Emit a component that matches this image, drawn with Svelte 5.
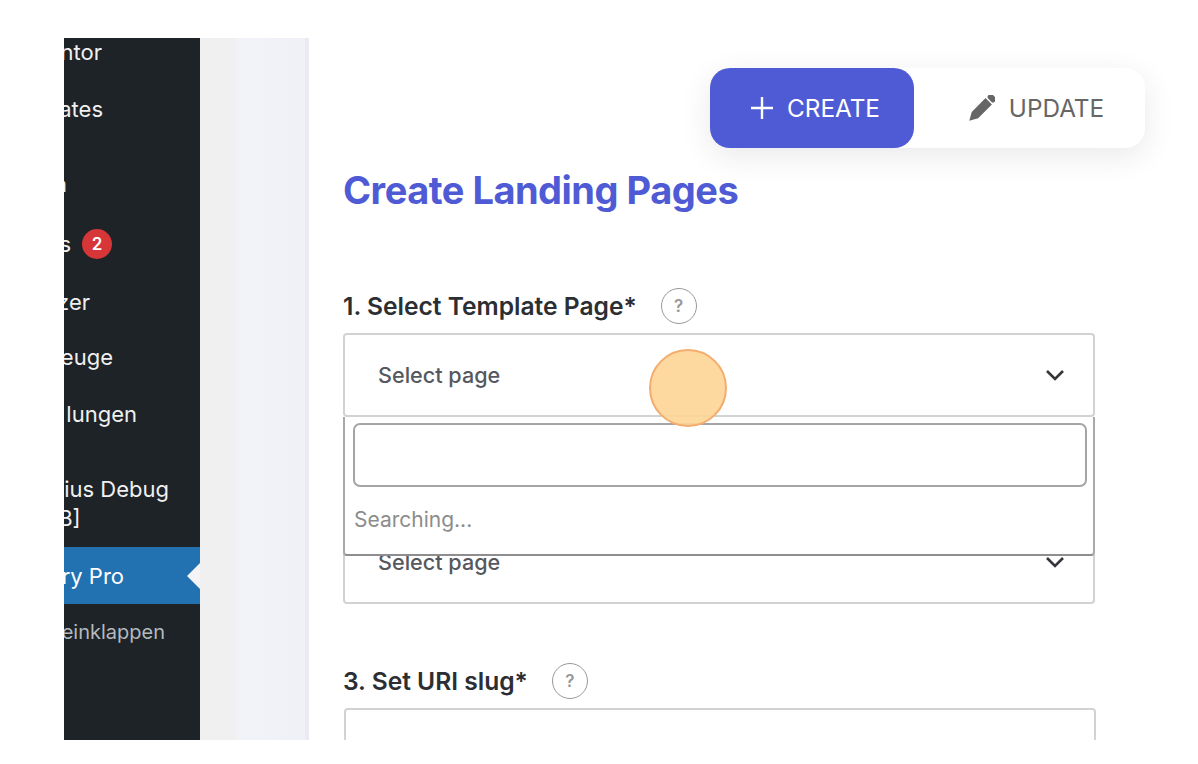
<script>
  // "end" is where the visible text stops, measured from the sidebar's left edge
  const menu = [
    { label: 'ntor', end: 38, gap: 0 },
    { label: 'ates', end: 39, gap: 2 },
    { label: 'n', end: 3, gap: 20 },
    { label: 's', end: 48, gap: 5, badge: 2 },
    { label: 'zer', end: 26, gap: 3 },
    { label: 'euge', end: 49, gap: 0 },
    { label: 'lungen', end: 73, gap: 2 },
    { label: 'ius Debug', second: 'B]', end: 105, gap: 21 },
    { label: 'ry Pro', end: 60, gap: 1, active: true },
    { label: 'einklappen', end: 101, gap: 0, muted: true }
  ];
</script>

<div class="frame">
  <aside class="sidebar">
    <ul class="menu">
      {#each menu as item}
        <li
          class="item"
          class:active={item.active}
          class:muted={item.muted}
          class:double={item.second}
          style:margin-top="{item.gap}px"
          style:padding-right="{136 - item.end}px"
        >
          <span class="item-label">
            {item.label}{#if item.second}<br /><span class="second">{item.second}</span>{/if}
          </span>
          {#if item.badge}<span class="badge">{item.badge}</span>{/if}
        </li>
      {/each}
    </ul>
  </aside>

  <div class="strip"></div>

  <main class="page">
    <div class="tabs">
      <button class="tab on">
        <svg width="22" height="22" viewBox="0 0 22 22"><path d="M11 0v22M0 11h22" fill="none" stroke="currentColor" stroke-width="2.4" /></svg>
        CREATE
      </button>
      <button class="tab">
        <svg width="26" height="26" viewBox="0 0 26 26">
          <g transform="rotate(45 13 13)" fill="currentColor">
            <rect x="8.5" y="-4" width="9" height="6" rx="2.5" />
            <path d="M8.5 3.5h9V23L13 31l-4.500-8z" />
          </g>
        </svg>
        UPDATE
      </button>
    </div>

    <h1>Create Landing Pages</h1>

    <section class="field first">
      <div class="label">1. Select Template Page* <span class="help">?</span></div>
      <div class="select-wrap">
        <div class="select">
          <span>Select page</span>
          <svg class="chev" width="20" height="12" viewBox="0 0 20 12"><path d="M2 2l8 8 8-8" fill="none" stroke="currentColor" stroke-width="2.6" /></svg>
        </div>
        <div class="dropdown">
          <input class="search" type="text" />
          <div class="searching">Searching...</div>
        </div>
      </div>
    </section>

    <section class="field covered">
      <div class="label"></div>
      <div class="select">
        <span>Select page</span>
        <svg class="chev" width="20" height="12" viewBox="0 0 20 12"><path d="M2 2l8 8 8-8" fill="none" stroke="currentColor" stroke-width="2.6" /></svg>
      </div>
    </section>

    <section class="field">
      <div class="label">3. Set URI slug* <span class="help">?</span></div>
      <div class="slug"></div>
    </section>

    <div class="click-dot"></div>
  </main>
</div>

<style>
  :global(body) {
    margin: 0;
    background: #fff;
    font-family: Inter, "Liberation Sans", sans-serif;
  }

  .frame {
    display: flex;
    box-sizing: border-box;
    width: 1198px;
    height: 702px;
    margin-top: 38px;
    padding-left: 64px;
    overflow: hidden;
  }

  .sidebar {
    flex: 0 0 136px;
    background: #1d2327;
    overflow: hidden;
  }

  .menu {
    list-style: none;
    margin: -14px 0 0;
    padding: 0;
  }

  .item {
    display: flex;
    align-items: center;
    justify-content: flex-end;
    height: 55px;
    color: #f0f0f1;
    font-size: 22px;
    white-space: nowrap;
  }

  .item.double {
    height: 84px;
    line-height: 29px;
  }

  .second {
    display: inline-block;
    margin-left: -6px;
  }

  .item.active {
    position: relative;
    height: 57px;
    background: #2271b1;
    color: #fff;
  }

  .item.active::after {
    content: "";
    position: absolute;
    right: 0;
    top: 16px;
    border: 13px solid transparent;
    border-left-width: 0;
    border-right-color: #f4f4f6;
  }

  .item.muted {
    color: #b4b9be;
    font-size: 20px;
  }

  .badge {
    display: flex;
    flex: none;
    align-items: center;
    justify-content: center;
    width: 30px;
    height: 30px;
    margin-left: 11px;
    border-radius: 50%;
    background: #d63638;
    color: #fff;
    font-size: 17px;
    font-weight: 600;
  }

  .strip {
    flex: 0 0 109px;
    box-sizing: border-box;
    border-right: 4px solid #e9eaf2;
    background: linear-gradient(90deg, #f0f0f1 0, #f0f0f0 32%, #f2f3f9 38%, #f0f1f7 100%);
  }

  .page {
    position: relative;
    flex: 0 0 802px;
    margin-left: 34px;
  }

  .tabs {
    display: flex;
    width: 435px;
    height: 80px;
    margin: 30px 0 0 367px;
    border-radius: 20px;
    background: #fff;
    box-shadow: 0 8px 30px rgba(40, 40, 60, 0.1);
  }

  .tab {
    display: flex;
    flex: 1;
    align-items: center;
    justify-content: center;
    gap: 14px;
    padding: 0 0 0 14px;
    border: 0;
    border-radius: 20px;
    background: none;
    color: #666;
    font: 400 24.3px Inter, "Liberation Sans", sans-serif;
  }

  .tab.on {
    flex: 0 0 204px;
    padding-left: 7px;
    background: #4f5bd5;
    color: #fff;
  }

  h1 {
    margin: 19px 0 0;
    color: #4f5bd5;
    font-size: 38px;
    font-weight: 700;
    line-height: 46px;
    letter-spacing: -0.5px;
  }

  .field {
    margin-top: 59px;
  }

  .field.first {
    margin-top: 75px;
  }

  .field.covered {
    margin-top: 58px;
  }

  .label {
    display: flex;
    align-items: center;
    gap: 24px;
    height: 36px;
    margin-bottom: 9px;
    color: #2b2e33;
    font-size: 24.6px;
    font-weight: 600;
  }

  .help {
    display: flex;
    align-items: center;
    justify-content: center;
    box-sizing: border-box;
    width: 36px;
    height: 36px;
    border: 1.5px solid #999;
    border-radius: 50%;
    color: #999;
    font-size: 17px;
    font-weight: 600;
  }

  .select-wrap {
    position: relative;
  }

  .select {
    display: flex;
    align-items: center;
    justify-content: space-between;
    box-sizing: border-box;
    width: 752px;
    height: 84px;
    padding: 0 28px 0 33px;
    border: 2px solid #d2d2d4;
    border-radius: 4px;
    color: #55585e;
    font-size: 21.6px;
    font-weight: 500;
  }

  .chev {
    color: #33363a;
  }

  .dropdown {
    position: absolute;
    z-index: 2;
    top: 84px;
    left: 0;
    box-sizing: border-box;
    width: 752px;
    height: 139px;
    padding: 6px 6px 0 8px;
    border: 2px solid #a9a9ab;
    border-top: 0;
    border-bottom-color: #8e8e90;
    border-radius: 0 0 4px 4px;
    background: #fff;
  }

  .search {
    display: block;
    box-sizing: border-box;
    width: 100%;
    height: 64px;
    border: 2px solid #a5a5a7;
    border-radius: 7px;
    background: #fff;
  }

  .searching {
    margin: 19px 0 0 1px;
    color: #8c8c8c;
    font-size: 21px;
    line-height: 28px;
  }

  .slug {
    box-sizing: border-box;
    width: 752px;
    height: 83px;
    margin-left: 1px;
    border: 2px solid #d2d2d4;
    border-radius: 4px;
  }

  .click-dot {
    position: absolute;
    z-index: 3;
    top: 311px;
    left: 306px;
    box-sizing: border-box;
    width: 78px;
    height: 78px;
    border: 2px solid #f3ad6e;
    border-radius: 50%;
    background: rgba(253, 212, 149, 0.9);
  }
</style>
